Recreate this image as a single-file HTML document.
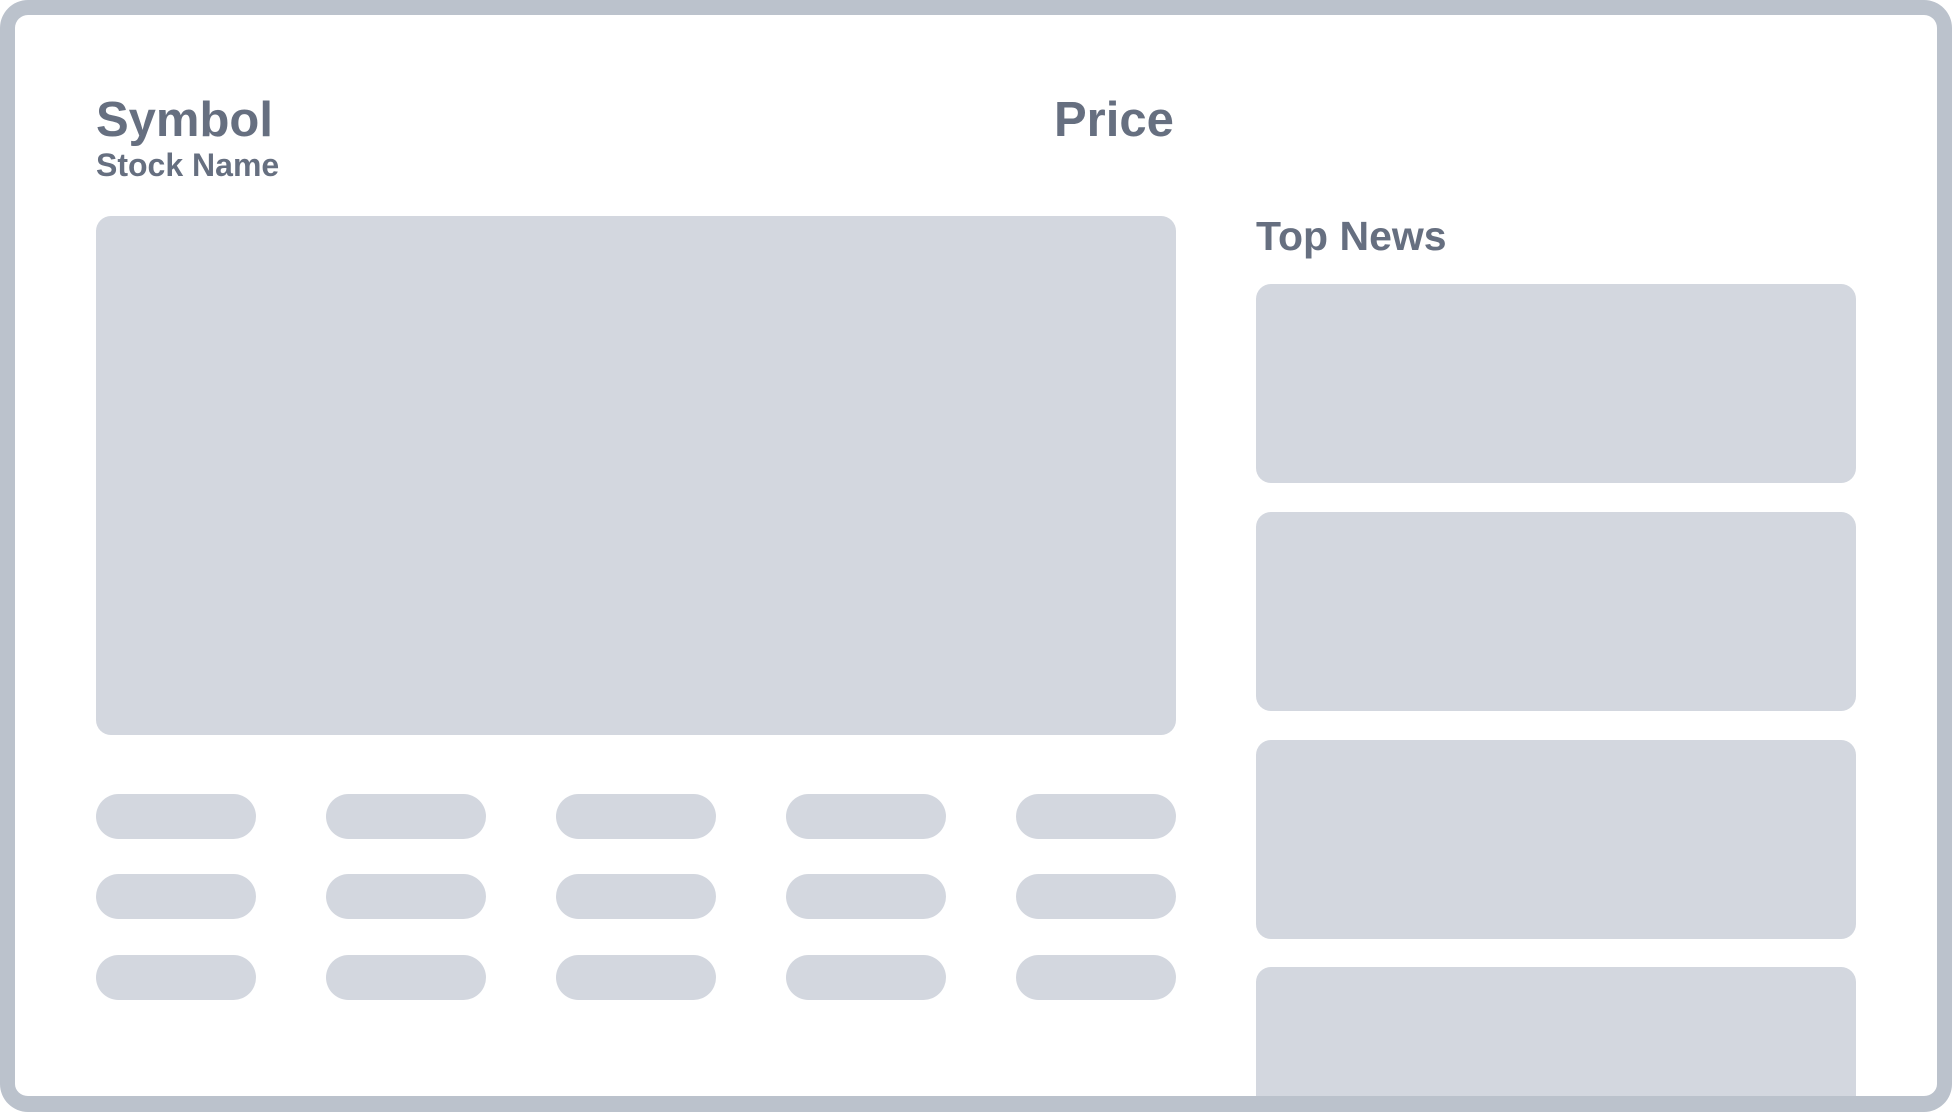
<!DOCTYPE html>
<html><head><meta charset="utf-8"><style>
*{margin:0;padding:0;box-sizing:border-box}
html,body{width:1952px;height:1112px;overflow:hidden;background:#fff;font-family:"Liberation Sans",sans-serif;}
#w{position:relative;width:1952px;height:1112px;overflow:hidden}
.t{position:absolute;color:#666f80;font-weight:bold;white-space:nowrap;line-height:1}
.b{position:absolute;background:#d3d7df}
.p{position:absolute;background:#d3d7df;height:45px;width:160px;border-radius:23px}
.frame{position:absolute;left:0;top:0;width:1952px;height:1112px;border:15px solid #bbc2cc;border-bottom-width:16px;border-radius:28px;}
</style></head><body><div id="w">
<div class="t" style="left:96px;top:96px;font-size:49px">Symbol</div>
<div class="t" style="left:96px;top:149px;font-size:32px">Stock Name</div>
<div class="t" style="left:1054px;top:96px;font-size:49px">Price</div>
<div class="t" style="left:1256px;top:216px;font-size:41px">Top News</div>
<div class="b" style="left:96px;top:216px;width:1080px;height:519px;border-radius:15px"></div>
<div class="p" style="left:96px;top:794px"></div><div class="p" style="left:326px;top:794px"></div><div class="p" style="left:556px;top:794px"></div><div class="p" style="left:786px;top:794px"></div><div class="p" style="left:1016px;top:794px"></div>
<div class="p" style="left:96px;top:874px"></div><div class="p" style="left:326px;top:874px"></div><div class="p" style="left:556px;top:874px"></div><div class="p" style="left:786px;top:874px"></div><div class="p" style="left:1016px;top:874px"></div>
<div class="p" style="left:96px;top:955px"></div><div class="p" style="left:326px;top:955px"></div><div class="p" style="left:556px;top:955px"></div><div class="p" style="left:786px;top:955px"></div><div class="p" style="left:1016px;top:955px"></div>
<div class="b" style="left:1256px;top:284px;width:600px;height:199px;border-radius:15px"></div>
<div class="b" style="left:1256px;top:512px;width:600px;height:199px;border-radius:15px"></div>
<div class="b" style="left:1256px;top:740px;width:600px;height:199px;border-radius:15px"></div>
<div class="b" style="left:1256px;top:967px;width:600px;height:135px;border-radius:15px 15px 0 0"></div>
<div class="frame"></div>
</div></body></html>
